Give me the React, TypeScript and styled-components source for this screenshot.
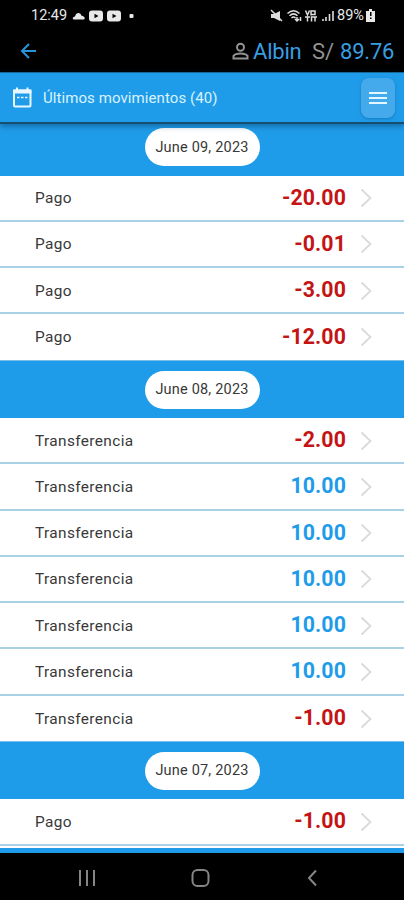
import React from "react";
import styled, { createGlobalStyle } from "styled-components";

const BLUE = "#1f9ce9";

const GlobalStyle = createGlobalStyle`
  * { box-sizing: border-box; }
  body { margin: 0; background: #000; font-family: Roboto, "Liberation Sans", sans-serif; }
`;

const Screen = styled.main`
  width: 404px;
  height: 900px;
  display: flex;
  flex-direction: column;
  overflow: hidden;
  background: #000;
`;

const StatusBar = styled.div`
  height: 30px;
  flex: none;
  display: flex;
  align-items: center;
  justify-content: space-between;
  padding: 1px 29px 0 31px;
  color: #e8e8e8;
`;

const StatusGroup = styled.div`
  display: flex;
  align-items: center;
`;

const StatusText = styled.span<{ $width: number }>`
  font-size: 14.5px;
  width: ${(p) => p.$width}px;
  white-space: nowrap;
`;

const AppBar = styled.header`
  height: 42px;
  flex: none;
  display: flex;
  align-items: center;
  justify-content: space-between;
  padding: 0 10px 0 20px;
`;

const Account = styled.div`
  display: flex;
  align-items: center;
  font-size: 22px;
  color: #3a9de0;
`;

const Name = styled.span`
  width: 59px;
  margin-left: 4px;
  letter-spacing: -0.2px;
`;

const Currency = styled.span`
  width: 28px;
  color: #929292;
`;

const Balance = styled.span`
  width: 54px;
  letter-spacing: -0.2px;
`;

const TitleBar = styled.section`
  position: relative;
  z-index: 1;
  height: 52px;
  flex: none;
  display: flex;
  align-items: center;
  padding: 0 9px 0 12px;
  background: ${BLUE};
  border-top: 1px solid #176799;
  border-bottom: 2px solid #174d70;
  box-shadow: 0 2px 6px rgba(0, 40, 75, 0.45);
`;

const Title = styled.h1`
  flex: 1;
  margin: 0 0 0 11px;
  font-size: 15px;
  font-weight: 400;
  letter-spacing: 0.08px;
  color: #d9f2ff;
`;

const MenuButton = styled.button`
  width: 34px;
  height: 40px;
  padding: 0;
  border: 0;
  border-radius: 8px;
  display: grid;
  place-items: center;
  background: #45aaec;
  box-shadow: 0 1px 3px rgba(0, 60, 120, 0.35);
`;

const List = styled.div`
  height: 729px;
  flex: none;
  overflow: hidden;
  background: ${BLUE};
`;

const DateHeader = styled.div<{ $first?: boolean }>`
  height: ${(p) => (p.$first ? 51.5 : 57.5)}px;
  padding-top: ${(p) => (p.$first ? 4 : 10)}px;
  display: flex;
  justify-content: center;
  align-items: flex-start;
`;

const DatePill = styled.div`
  width: 115px;
  height: 38px;
  border-radius: 19px;
  background: #fff;
  display: flex;
  align-items: center;
  justify-content: center;
  font-size: 14.5px;
  letter-spacing: 0.2px;
  color: #383838;
`;

const Rows = styled.ul`
  margin: 0;
  padding: 0;
  list-style: none;
`;

const Row = styled.li<{ $closing: boolean }>`
  height: 46.25px;
  display: flex;
  align-items: center;
  padding: 1px 31px 0 35px;
  background: #fff;
  border-bottom: ${(p) => (p.$closing ? "1px solid #79bfe9" : "2px solid #a9d1e5")};
`;

const Kind = styled.span`
  flex: 1;
  font-size: 15.4px;
  letter-spacing: 0.38px;
  color: #383838;
`;

const Amount = styled.span<{ $credit: boolean }>`
  font-size: 21.3px;
  line-height: 24px;
  font-weight: 700;
  letter-spacing: 0.1px;
  margin: 0 14px 1px 0;
  color: ${(p) => (p.$credit ? BLUE : "#c41414")};
`;

const ListEnd = styled.div`
  height: 2.5px;
  background: #fff;
`;

const NavBar = styled.nav`
  flex: 1;
  display: grid;
  grid-template-columns: 20px 20px 14px;
  column-gap: 93px;
  align-items: center;
  padding: 2px 0 0 77px;
`;

const days = [
  { date: "June 09, 2023", rows: [["Pago", "-20.00"], ["Pago", "-0.01"], ["Pago", "-3.00"], ["Pago", "-12.00"]] },
  {
    date: "June 08, 2023",
    rows: [
      ["Transferencia", "-2.00"],
      ["Transferencia", "10.00"],
      ["Transferencia", "10.00"],
      ["Transferencia", "10.00"],
      ["Transferencia", "10.00"],
      ["Transferencia", "10.00"],
      ["Transferencia", "-1.00"],
    ],
  },
  { date: "June 07, 2023", rows: [["Pago", "-1.00"]] },
];

const Notifications = () => (
  <svg width="62" height="14" viewBox="0 0 62 14" fill="#e8e8e8">
    <path d="M2.5 10.5C0 10.5 .2 8 3 7.5 4 3 8.5 3 9.5 6.7c3.4.3 4.5 3.8 1.5 3.8z" />
    <path fillRule="evenodd" d="M20 1.5h8q3 0 3 3v5q0 3-3 3h-8q-3 0-3-3v-5q0-3 3-3zm2.5 3.2v4.500l4-2.200z" />
    <path fillRule="evenodd" d="M38 1.5h8q3 0 3 3v5q0 3-3 3h-8q-3 0-3-3v-5q0-3 3-3zm2.5 3.2v4.500l4-2.200z" />
    <rect x="57.5" y="5" width="4" height="4" rx="1" />
  </svg>
);

const Signals = () => (
  <svg width="67" height="14" viewBox="0 0 67 14" fill="none" stroke="#dedede" strokeWidth="1.5">
    <path d="M1 5h3l6-3v10L4 9H1z" fill="#dedede" stroke="none" />
    <path d="M1 1l11 11" />
    <path d="M17.5 4.5q6-5.5 12 0M19.5 6.7q4-3.7 8 0M21.5 9q2-2 4 0M27 8v4m-2-2l2 2 2-2M30.5 12V8" />
    <path d="M35.5 1.5l2 4.5 2-4.500M41 6.500V2h4v3.500h-4M35 8h5M37.500 8v4.500M41.500 12.500V8H47M45 8v4.500" />
    <path d="M53 12v-2M56 12V8M59.5 12V5M63 12V2" strokeWidth="1.6" />
  </svg>
);

const Battery = () => (
  <svg width="9" height="13" viewBox="0 0 9 13">
    <path fill="#e8e8e8" fillRule="evenodd" d="M3 0h3v2h3v11H0V2h3zm1 3v4h1.5V3zm0 5.5V10h1.5V8.5z" />
  </svg>
);

const Chevron = () => (
  <svg width="13" height="20" viewBox="0 0 13 20" fill="none" stroke="#dadada" strokeWidth="1.8">
    <path d="M1.5 1.5L10.5 10l-9 8.5" />
  </svg>
);

export default function App() {
  return (
    <>
      <GlobalStyle />
      <Screen>
        <StatusBar>
          <StatusGroup>
            <StatusText $width={41}>12:49</StatusText>
            <Notifications />
          </StatusGroup>
          <StatusGroup>
            <Signals />
            <StatusText $width={29}>89%</StatusText>
            <Battery />
          </StatusGroup>
        </StatusBar>
        <AppBar>
          <svg width="17" height="18" viewBox="0 0 17 18" fill="none" stroke="#2894dc" strokeWidth="2">
            <path d="M16 9H2M9 2L2 9l7 7" />
          </svg>
          <Account>
            <svg width="17" height="18" viewBox="0 0 17 18" fill="none" stroke="#929292" strokeWidth="2">
              <circle cx="8.5" cy="5.2" r="3.5" />
              <path d="M1.5 16.5v-2.700Q3.500 11.500 8.500 11.500T15.500 13.800v2.700z" />
            </svg>
            <Name>Albin</Name>
            <Currency>S/</Currency>
            <Balance>89.76</Balance>
          </Account>
        </AppBar>
        <TitleBar>
          <svg width="20" height="22" viewBox="0 0 20 22" fill="none" stroke="#e8f7ff" strokeWidth="2">
            <rect x="2" y="3.5" width="16.5" height="16" rx="1" />
            <path d="M1 4.5h18.500" strokeWidth="4" />
            <path d="M5 .5v4M15.500 .5v4" />
            <path d="M5 10.5h2.500M9 10.500h2.500M13 10.500h2.500" strokeWidth="1.5" />
          </svg>
          <Title>Últimos movimientos (40)</Title>
          <MenuButton aria-label="Menu">
            <svg width="18" height="14" viewBox="0 0 18 14" stroke="#e2f7ff" strokeWidth="2">
              <path d="M0 2h18M0 7h18M0 12h18" />
            </svg>
          </MenuButton>
        </TitleBar>
        <List>
          {days.map((day, i) => (
            <React.Fragment key={day.date}>
              <DateHeader $first={i === 0}>
                <DatePill>{day.date}</DatePill>
              </DateHeader>
              <Rows>
                {day.rows.map(([kind, amount], j) => (
                  <Row key={j} $closing={i < days.length - 1 && j === day.rows.length - 1}>
                    <Kind>{kind}</Kind>
                    <Amount $credit={!amount.startsWith("-")}>{amount}</Amount>
                    <Chevron />
                  </Row>
                ))}
              </Rows>
            </React.Fragment>
          ))}
          <ListEnd />
        </List>
        <NavBar>
          <svg width="20" height="18" viewBox="0 0 20 18" stroke="#858585" strokeWidth="2">
            <path d="M3 1v16M10 1v16M17 1v16" />
          </svg>
          <svg width="20" height="20" viewBox="0 0 20 20" fill="none" stroke="#858585" strokeWidth="2">
            <rect x="2.5" y="2" width="16" height="16" rx="5" />
          </svg>
          <svg width="14" height="18" viewBox="0 0 14 18" fill="none" stroke="#858585" strokeWidth="2">
            <path d="M13 1.500L6 9l7 7.500" />
          </svg>
        </NavBar>
      </Screen>
    </>
  );
}
